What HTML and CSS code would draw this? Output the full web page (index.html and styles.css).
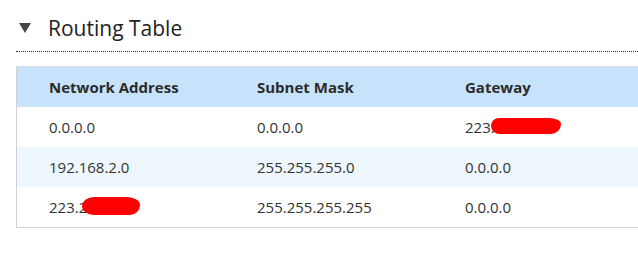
FILE: index.html
```html
<!DOCTYPE html>
<html>
<head>
<meta charset="utf-8">
<link rel="stylesheet" href="styles.css">
</head>
<body>
<div class="section">
  <div class="section-head">
    <span class="caret"></span>
    <h2 class="title">Routing Table</h2>
  </div>
  <table class="routes">
    <thead>
      <tr><th>Network Address</th><th>Subnet Mask</th><th>Gateway</th></tr>
    </thead>
    <tbody>
      <tr><td>0.0.0.0</td><td>0.0.0.0</td><td><span class="masked">223.<span class="blot blot-b"></span></span></td></tr>
      <tr class="alt"><td>192.168.2.0</td><td>255.255.255.0</td><td>0.0.0.0</td></tr>
      <tr><td><span class="masked">223.2<span class="blot blot-c"></span></span></td><td>255.255.255.255</td><td>0.0.0.0</td></tr>
    </tbody>
  </table>
</div>
</body>
</html>
```
FILE: styles.css
```css
html, body {
  margin: 0;
  padding: 0;
  background: #fff;
}
body {
  font-family: "Segoe UI", "Open Sans", "Noto Sans", sans-serif;
  color: #333;
  width: 638px;
  height: 266px;
  overflow: hidden;
}
.section {
  padding: 11px 0 0 16px;
}
.section-head {
  display: flex;
  align-items: center;
  height: 34px;
  padding-bottom: 6px;
  border-bottom: 1px dotted #333;
}
.caret {
  width: 0;
  height: 0;
  margin-left: 3px;
  margin-right: 17px;
  border-left: 6px solid transparent;
  border-right: 6px solid transparent;
  border-top: 10px solid #444;
}
.title {
  margin: 0;
  font-size: 21px;
  font-weight: 400;
  color: #222;
}
.routes {
  margin-top: 14px;
  border-collapse: collapse;
  width: 622px;
  table-layout: fixed;
  border-left: 1px solid #d0d0d0;
  border-top: 1px solid #dcdcdc;
  border-bottom: 1px solid #cfcfcf;
  font-size: 15px;
}
.routes th, .routes td {
  text-align: left;
  padding: 0 0 0 32px;
  width: 176px;
  height: 40px;
  vertical-align: middle;
  white-space: nowrap;
}
.routes th:last-child, .routes td:last-child {
  width: auto;
}
.routes thead tr {
  background: #c7e3fb;
}
.routes th {
  font-weight: 700;
  color: #2b2b2b;
}
.routes td {
  color: #333;
}
.routes tr.alt {
  background: #eef6fe;
}
.masked {
  position: relative;
}
.blot {
  position: absolute;
  background: #f00;
}
.blot-b {
  left: 26px;
  top: 1px;
  width: 70px;
  height: 16px;
  border-radius: 8px 12px 10px 9px / 8px 6px 10px 8px;
}
.blot-c {
  left: 33px;
  top: 0;
  width: 58px;
  height: 18px;
  border-radius: 12px 14px 10px 12px / 9px 8px 10px 9px;
}
```
